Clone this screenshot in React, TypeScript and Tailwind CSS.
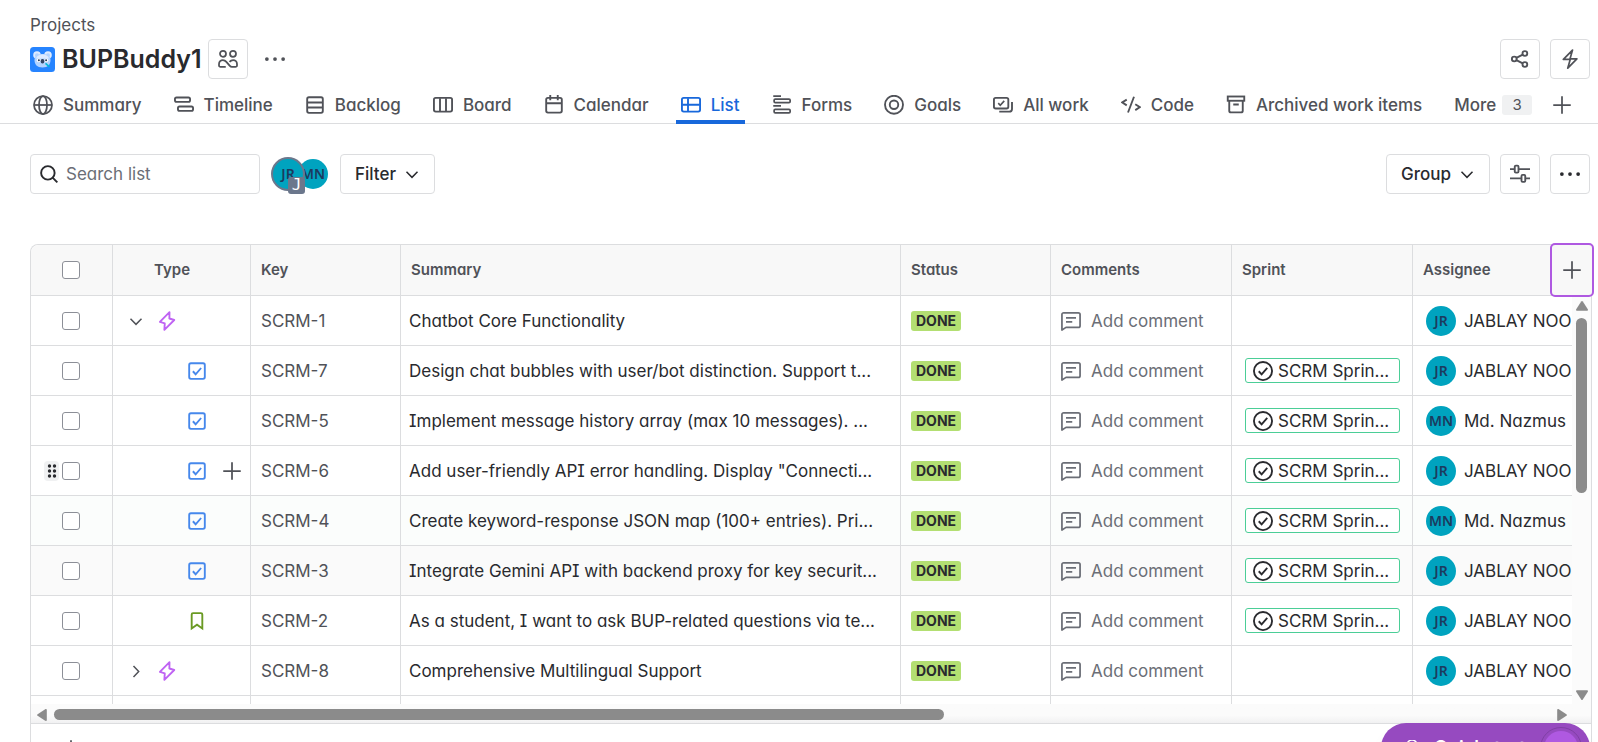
import React, { type ReactNode } from "react";

const FONT = "font-['Inter','Liberation_Sans',sans-serif] [font-feature-settings:'cv11','cv08']";

type IconProps = { children: ReactNode; className?: string };

function Icon({ children, className = "size-5" }: IconProps) {
  return (
    <svg
      viewBox="0 0 16 16"
      className={`shrink-0 ${className}`}
      fill="none"
      stroke="currentColor"
      strokeWidth="1.5"
      aria-hidden="true"
    >
      {children}
    </svg>
  );
}

const GlobeIcon = () => (
  <Icon>
    <circle cx="8" cy="8" r="7.2" strokeWidth="1.4" />
    <ellipse cx="8" cy="8" rx="3.2" ry="7.2" strokeWidth="1.4" />
    <path d="M1 8h14" strokeWidth="1.4" />
  </Icon>
);
const TimelineIcon = () => (
  <Icon>
    <rect x="0.75" y="1.95" width="12.1" height="3.5" rx="1.3" />
    <rect x="3.15" y="9.2" width="12.1" height="3.5" rx="1.3" />
  </Icon>
);
const BacklogIcon = () => (
  <Icon>
    <rect x="1.75" y="1.75" width="12.5" height="12.5" rx="1.4" />
    <path d="M2 6h12M2 10h12" />
  </Icon>
);
const BoardIcon = () => (
  <Icon>
    <rect x="0.75" y="2.25" width="14.5" height="11" rx="1.4" />
    <path d="M5.6 2.5v10.5M10.4 2.5v10.5" />
  </Icon>
);
const CalendarIcon = () => (
  <Icon>
    <rect x="1.75" y="2.25" width="12.5" height="11.8" rx="1.4" />
    <path d="M2 6.6h12M5 0v4.2M11 0v4.2" />
  </Icon>
);
const ListIcon = () => (
  <Icon>
    <rect x="0.75" y="2.25" width="14.5" height="11" rx="1.4" />
    <path d="M5.6 2.5v10.5M1 7.8h14" />
  </Icon>
);
const FormsIcon = () => (
  <Icon>
    <path d="M1 .8h6.2M1 8.6h6.2" strokeWidth="1.4" />
    <rect x="1.7" y="3.2" width="12.8" height="2.8" rx="0.9" strokeWidth="1.4" />
    <rect x="1.7" y="11.4" width="12.8" height="2.8" rx="0.9" strokeWidth="1.4" />
  </Icon>
);
const GoalsIcon = () => (
  <Icon>
    <circle cx="8" cy="7.8" r="7.2" />
    <circle cx="8" cy="7.8" r="3.4" />
  </Icon>
);
const AllWorkIcon = () => (
  <Icon>
    <rect x="0.75" y="2.25" width="11.5" height="8.5" rx="1.4" />
    <path d="m4.2 6.5 1.6 1.7L9 4.7" strokeWidth="1.3" />
    <path d="M15.2 5.500v5.600a2.200 2.200 0 0 1-2.200 2.200H5" />
  </Icon>
);
const CodeIcon = () => (
  <Icon>
    <path d="M4.6 3.700.9 5.900l3.700 2.400M11.400 7.400l3.800 2.300-3.800 2.400M10.400 1.400 5.600 14" />
  </Icon>
);
const ArchiveIcon = () => (
  <Icon>
    <rect x="1.4" y="1.2" width="13.2" height="3.4" />
    <path d="M2.600 4.600v7.900c0 .8.600 1.400 1.400 1.400h8c.8 0 1.400-.6 1.400-1.400V4.600M5.800 7.600h4.400" />
  </Icon>
);
const PlusIcon = () => (
  <Icon>
    <path d="M8 1v14M1 8h14" strokeWidth="1.4" />
  </Icon>
);
const DotsIcon = () => (
  <Icon>
    <g fill="currentColor" stroke="none">
      <circle cx="1.5" cy="8" r="1.5" />
      <circle cx="8" cy="8" r="1.5" />
      <circle cx="14.5" cy="8" r="1.5" />
    </g>
  </Icon>
);
const PeopleIcon = () => (
  <Icon>
    <circle cx="4" cy="3.8" r="2.4" strokeWidth="1.4" />
    <circle cx="12" cy="3.8" r="2.4" strokeWidth="1.4" />
    <path
      d="M6.2 14.3H2a1.2 1.2 0 0 1-1.2-1.2v-1.2A3.1 3.1 0 0 1 3.9 8.8c1.2 0 2 .5 2.8 1.5l2.6 3c.6.7 1.1 1 1.9 1H14a1.2 1.2 0 0 0 1.2-1.2v-1.2a3.1 3.1 0 0 0-3.1-3.1c-1.3 0-2 .4-2.9 1.5"
      strokeWidth="1.4"
    />
  </Icon>
);
const ShareIcon = () => (
  <Icon>
    <circle cx="3.4" cy="8" r="1.9" />
    <circle cx="11.9" cy="3.6" r="1.9" />
    <circle cx="11.9" cy="12.4" r="1.9" />
    <path d="m5.1 7.1 5.1-2.6M5.1 8.900l5.1 2.600" />
  </Icon>
);
const AutomationIcon = () => (
  <Icon>
    <path d="M10 .9 2.7 8.300h5.500L6.200 15.300 13.500 7.900H8z" strokeLinejoin="round" strokeWidth="1.4" />
  </Icon>
);
const SlidersIcon = () => (
  <Icon>
    <rect x="3.8" y="1.3" width="3" height="5.6" rx=".9" />
    <rect x="9.2" y="8.7" width="3" height="5.6" rx=".9" />
    <path d="M0 4.1h3.8M6.8 4.1H16M0 11.5h9.2M12.2 11.5H16" strokeWidth="1.3" />
  </Icon>
);
const EpicIcon = () => (
  <Icon>
    <path d="M10 .9 2.3 8.700l3.900 1.200-.3 5.200 7.900-7.900-3.900-1.200z" strokeLinejoin="round" />
  </Icon>
);
const TaskIcon = () => (
  <Icon>
    <rect x="1.75" y="1.75" width="12.5" height="12.5" rx="1.4" />
    <path d="m4.7 8.2 2.2 2.4 4.4-5" />
  </Icon>
);
const StoryIcon = () => (
  <Icon>
    <path d="M3.75 14V2.8c0-.6.5-1.1 1.1-1.1h6.300c.6 0 1.100.5 1.100 1.100V14L8 10.900z" />
  </Icon>
);
const CommentIcon = () => (
  <Icon>
    <path
      d="M.75 15.2V2.8c0-.8.6-1.400 1.400-1.400h11.700c.8 0 1.400.6 1.400 1.400v8.900c0 .8-.6 1.400-1.400 1.400H4z"
      strokeLinejoin="round"
      strokeWidth="1.4"
    />
    <path d="M4 5.500h8M4 8.700h5" strokeWidth="1.4" />
  </Icon>
);
const CheckCircleIcon = () => (
  <Icon>
    <circle cx="8" cy="8" r="7.25" />
    <path d="m4.600 8.200 2.300 2.500 4.500-5.200" />
  </Icon>
);
const SearchIcon = () => (
  <Icon className="size-[18px]">
    <circle cx="7" cy="7" r="6" strokeWidth="1.7" />
    <path d="m11.200 11.200 4.200 4.200" strokeWidth="1.7" />
  </Icon>
);
const ChevronDown = () => (
  <Icon className="size-4">
    <path d="m2.500 5.800 5.500 5.600 5.500-5.600" />
  </Icon>
);
const ChevronRight = () => (
  <Icon className="size-4">
    <path d="m5.500 2.900 5.200 5.600-5.200 5.600" />
  </Icon>
);

function KoalaLogo() {
  return (
    <svg viewBox="0 0 25 25" className="size-[25px] shrink-0" aria-hidden="true">
      <rect width="25" height="25" rx="3.5" fill="#2684ff" />
      <circle cx="7" cy="8" r="3.8" fill="#deebff" />
      <circle cx="18" cy="8" r="3.8" fill="#deebff" />
      <circle cx="7" cy="8.2" r="2" fill="#b3d4ff" />
      <circle cx="18" cy="8.2" r="2" fill="#b3d4ff" />
      <path d="M4.500 13C4.500 8.500 8.500 7 12.500 7s8 1.500 8 6-2.500 7.500-8 7.500-8-3-8-7.500z" fill="#b3d4ff" />
      <path d="M6 11.500c1-3 3.500-4 6.500-4s5.500 1 6.500 4z" fill="#deebff" />
      <circle cx="8.7" cy="13.3" r="1.9" fill="#fff" />
      <circle cx="16.3" cy="13.3" r="1.9" fill="#fff" />
      <circle cx="8.9" cy="13.3" r="1" fill="#253858" />
      <circle cx="16.1" cy="13.3" r="1" fill="#253858" />
      <rect x="10.7" y="12" width="3.6" height="4.5" rx="1.7" fill="#344563" />
      <path d="m15.500 16.300 4 3.500" stroke="#00b8d9" strokeWidth="1.6" />
    </svg>
  );
}

const TABS: { label: string; icon: ReactNode; active?: boolean }[] = [
  { label: "Summary", icon: <GlobeIcon /> },
  { label: "Timeline", icon: <TimelineIcon /> },
  { label: "Backlog", icon: <BacklogIcon /> },
  { label: "Board", icon: <BoardIcon /> },
  { label: "Calendar", icon: <CalendarIcon /> },
  { label: "List", icon: <ListIcon />, active: true },
  { label: "Forms", icon: <FormsIcon /> },
  { label: "Goals", icon: <GoalsIcon /> },
  { label: "All work", icon: <AllWorkIcon /> },
  { label: "Code", icon: <CodeIcon /> },
  { label: "Archived work items", icon: <ArchiveIcon /> },
];

type Row = {
  key: string;
  type: "epic" | "task" | "story";
  open?: boolean;
  hovered?: boolean;
  tint?: string;
  summary: string;
  sprint: boolean;
  who: "JR" | "MN";
};

const ROWS: Row[] = [
  { key: "SCRM-1", type: "epic", open: true, summary: "Chatbot Core Functionality", sprint: false, who: "JR" },
  { key: "SCRM-7", type: "task", summary: "Design chat bubbles with user/bot distinction. Support t...", sprint: true, who: "JR" },
  { key: "SCRM-5", type: "task", summary: "Implement message history array (max 10 messages). ...", sprint: true, who: "MN" },
  { key: "SCRM-6", type: "task", hovered: true, summary: "Add user-friendly API error handling. Display \"Connecti...", sprint: true, who: "JR" },
  { key: "SCRM-4", type: "task", tint: "bg-[#fbfdfc]", summary: "Create keyword-response JSON map (100+ entries). Pri...", sprint: true, who: "MN" },
  { key: "SCRM-3", type: "task", tint: "bg-[#fafafa]", summary: "Integrate Gemini API with backend proxy for key securit...", sprint: true, who: "JR" },
  { key: "SCRM-2", type: "story", summary: "As a student, I want to ask BUP-related questions via te...", sprint: true, who: "JR" },
  { key: "SCRM-8", type: "epic", summary: "Comprehensive Multilingual Support", sprint: false, who: "JR" },
];

const NAMES = { JR: "JABLAY NOOR", MN: "Md. Nazmus" };
const LINE = "border-[#dcdddf]";
const BUTTON = "flex size-10 items-center justify-center rounded-[4px] border border-[#dcdddf] bg-white";

function Avatar({ initials }: { initials: string }) {
  return (
    <span className="flex size-[30px] shrink-0 items-center justify-center rounded-full bg-[#00a3bf] font-['Noto_Sans',sans-serif] text-sm font-semibold text-[#1c3a5e]">
      {initials}
    </span>
  );
}

function Check({ label }: { label: string }) {
  return (
    <input
      type="checkbox"
      aria-label={label}
      className="block size-[18px] appearance-none rounded-[3px] border border-[#8c8f97] bg-white"
    />
  );
}

function HeadCell({ children, className = "px-2.5" }: { children: ReactNode; className?: string }) {
  return (
    <th className={`h-[51px] border-r border-b ${LINE} bg-[#f8f8f8] text-left text-[15px] leading-5 font-semibold ${className}`}>
      {children}
    </th>
  );
}

function TypeCell({ row }: { row: Row }) {
  if (row.type === "epic") {
    return (
      <div className="flex items-center gap-[13px] pl-[15px]">
        <button type="button" aria-label="Toggle children">
          {row.open ? <ChevronDown /> : <ChevronRight />}
        </button>
        <span className="text-[#bf63f3]">
          <EpicIcon />
        </span>
      </div>
    );
  }
  return (
    <div className="flex items-center gap-[15px] pl-[74px]">
      <span className={row.type === "task" ? "text-[#4688ec]" : "text-[#6a9a23]"}>
        {row.type === "task" ? <TaskIcon /> : <StoryIcon />}
      </span>
      {row.hovered && (
        <button type="button" aria-label="Create child">
          <PlusIcon />
        </button>
      )}
    </div>
  );
}

function BodyRow({ row }: { row: Row }) {
  const cell = `h-[50px] border-r border-b ${LINE} p-0`;
  return (
    <tr className={row.tint}>
      <td className={cell}>
        <div className="relative flex justify-center pr-0.5">
          <Check label={`Select ${row.key}`} />
          {row.hovered && (
            <span className="absolute top-1/2 left-[13px] flex h-5 w-[15px] -translate-y-1/2 items-center justify-center rounded-[4px] bg-[#f0f1f2]">
              <svg viewBox="0 0 10 14" className="h-3.5 w-2.5" fill="#292a2e" aria-hidden="true">
                <circle cx="2.5" cy="2" r="1.7" />
                <circle cx="7.5" cy="2" r="1.7" />
                <circle cx="2.5" cy="7" r="1.7" />
                <circle cx="7.5" cy="7" r="1.7" />
                <circle cx="2.5" cy="12" r="1.7" />
                <circle cx="7.5" cy="12" r="1.7" />
              </svg>
            </span>
          )}
        </div>
      </td>
      <td className={cell}>
        <TypeCell row={row} />
      </td>
      <td className={cell}>
        <a href="#" className="block pl-2.5 text-[#505258]">
          {row.key}
        </a>
      </td>
      <td className={cell}>
        <div className="overflow-hidden pl-2 whitespace-nowrap text-[#292a2e]">{row.summary}</div>
      </td>
      <td className={cell}>
        <div className="flex pl-2.5">
          <span className="flex h-5 items-center rounded-[3px] bg-[#b3df72] px-[5px] text-sm leading-5 font-bold text-[#292a2e]">
            DONE
          </span>
        </div>
      </td>
      <td className={cell}>
        <button type="button" className="flex items-center gap-2.5 pl-2.5 text-[#6b6e76]">
          <CommentIcon />
          Add comment
        </button>
      </td>
      <td className={cell}>
        {row.sprint && (
          <div className="mr-3 ml-[13px] flex h-[25px] items-center gap-[5px] overflow-hidden rounded-[3px] border border-[#4bce97] bg-white pl-[7px] whitespace-nowrap text-[#292a2e]">
            <CheckCircleIcon />
            SCRM Sprin...
          </div>
        )}
      </td>
      <td className={cell}>
        <div className="flex items-center gap-2 pl-[13px] whitespace-nowrap text-[#292a2e]">
          <Avatar initials={row.who} />
          {NAMES[row.who]}
        </div>
      </td>
    </tr>
  );
}

export default function App() {
  return (
    <div className={`${FONT} relative flex h-screen flex-col overflow-hidden bg-white text-[17px] leading-6 text-[#505258]`}>
      <header className={`shrink-0 border-b ${LINE}`}>
        <div className="pt-[13px] pr-2 pl-[30px]">
          <a href="#">Projects</a>
          <div className="mt-0.5 flex items-center gap-[7px]">
            <KoalaLogo />
            <h1 className="text-[25px] leading-8 font-semibold text-[#292a2e]">BUPBuddy1</h1>
            <button type="button" aria-label="Team" className={BUTTON}>
              <PeopleIcon />
            </button>
            <button type="button" aria-label="More actions" className="ml-2.5 p-0">
              <DotsIcon />
            </button>
            <div className="ml-auto flex gap-2.5">
              <button type="button" aria-label="Share" className={BUTTON}>
                <ShareIcon />
              </button>
              <button type="button" aria-label="Automation" className={BUTTON}>
                <AutomationIcon />
              </button>
            </div>
          </div>
        </div>
        <nav className="mt-[7px] -mb-px flex h-[38px] items-stretch gap-[22px] pl-7 font-medium whitespace-nowrap">
          {TABS.map((tab) => (
            <a
              key={tab.label}
              href="#"
              className={
                tab.active
                  ? "flex items-center gap-2.5 border-b-4 border-[#1868db] px-[5px] pt-1 text-[#1868db]"
                  : "flex items-center gap-2.5 px-[5px]"
              }
            >
              {tab.icon}
              {tab.label}
            </a>
          ))}
          <div className="flex gap-5">
            <button type="button" className="flex items-center gap-1.5 pl-[5px] font-medium">
              More
              <span className="flex h-5 w-[30px] items-center justify-center rounded-[3px] bg-[#f0f1f2] text-[15px] font-normal">
                3
              </span>
            </button>
            <button type="button" aria-label="Add view">
              <PlusIcon />
            </button>
          </div>
        </nav>
      </header>

      <div className="flex shrink-0 items-center pt-[30px] pr-2 pl-[30px] font-medium text-[#292a2e]">
        <label className={`flex h-10 w-[230px] items-center gap-2 rounded-[4px] border ${LINE} pl-[9px]`}>
          <SearchIcon />
          <input
            type="text"
            aria-label="Search list"
            placeholder="Search list"
            className="min-w-0 flex-1 font-normal outline-none placeholder:text-[#6b6e76]"
          />
        </label>
        <div className="ml-[11px] flex items-center">
          <div className="relative z-10 flex size-[34px] items-center justify-center rounded-full bg-[#6b778c]">
            <Avatar initials="JR" />
            <span className="absolute right-0 -bottom-[3px] flex size-[17px] items-center justify-center rounded-[3px] bg-[#6b778c] pb-0.5 font-['DejaVu_Sans_Mono',monospace] text-base leading-4 text-white">
              J
            </span>
          </div>
          <div className="-ml-[7px]">
            <Avatar initials="MN" />
          </div>
        </div>
        <button type="button" className={`ml-3 flex h-10 items-center gap-2 rounded-[4px] border ${LINE} px-3.5`}>
          Filter
          <ChevronDown />
        </button>
        <div className="ml-auto flex gap-2.5">
          <button type="button" className={`flex h-10 items-center gap-2 rounded-[4px] border ${LINE} px-3.5`}>
            Group
            <ChevronDown />
          </button>
          <button type="button" aria-label="View settings" className={`${BUTTON} text-[#505258]`}>
            <SlidersIcon />
          </button>
          <button type="button" aria-label="More" className={BUTTON}>
            <DotsIcon />
          </button>
        </div>
      </div>

      <main className={`relative mt-[50px] mr-1.5 ml-[30px] flex min-h-0 flex-1 flex-col rounded-tl-lg border-t border-r border-l ${LINE}`}>
        <div className="relative min-h-0 flex-1 overflow-hidden rounded-tl-lg">
          <table className="w-[1600px] table-fixed border-separate border-spacing-0">
            <colgroup>
              <col className="w-[82px]" />
              <col className="w-[138px]" />
              <col className="w-[150px]" />
              <col className="w-[500px]" />
              <col className="w-[150px]" />
              <col className="w-[181px]" />
              <col className="w-[181px]" />
              <col />
            </colgroup>
            <thead>
              <tr>
                <HeadCell className="p-0">
                  <div className="flex justify-center pr-0.5">
                    <Check label="Select all" />
                  </div>
                </HeadCell>
                <HeadCell className="pl-[41px]">Type</HeadCell>
                <HeadCell>Key</HeadCell>
                <HeadCell>Summary</HeadCell>
                <HeadCell>Status</HeadCell>
                <HeadCell>Comments</HeadCell>
                <HeadCell>Sprint</HeadCell>
                <HeadCell>Assignee</HeadCell>
              </tr>
            </thead>
            <tbody>
              {ROWS.map((row) => (
                <BodyRow key={row.key} row={row} />
              ))}
              <tr>
                {[1, 2, 3, 4, 5, 6, 7, 8].map((n) => (
                  <td key={n} className={`h-[50px] border-r ${LINE}`} />
                ))}
              </tr>
            </tbody>
          </table>
          <div className="absolute top-[51px] right-0 bottom-0 flex w-[19px] flex-col items-center bg-[#fbfbfb] pt-[5px] pb-1 text-[#8b8b8b]">
            <svg viewBox="0 0 12 10" className="h-2.5 w-3" fill="currentColor" aria-hidden="true">
              <path d="M5.200.6a1 1 0 0 1 1.600 0l5 7.600c.4.700 0 1.600-.8 1.600H1c-.8 0-1.200-.9-.8-1.600z" />
            </svg>
            <div className="flex w-full flex-1 justify-center pt-[7px]">
              <div className="h-[47%] w-[11px] rounded-full bg-[#8b8b8b]" />
            </div>
            <svg viewBox="0 0 12 10" className="h-2.5 w-3" fill="currentColor" aria-hidden="true">
              <path d="M5.200 9.400a1 1 0 0 0 1.600 0l5-7.600C12.200 1.100 11.800.2 11 .2H1C.2.2-.2 1.100.2 1.800z" />
            </svg>
          </div>
        </div>
        <div className="flex h-[19px] shrink-0 items-center bg-linear-to-b from-[#fbfbfb] from-60% to-[#f1f1f2] pt-0.5 pr-6 pl-1.5 text-[#8b8b8b]">
          <svg viewBox="0 0 10 12" className="h-3 w-2.5 shrink-0" fill="currentColor" aria-hidden="true">
            <path d="M.6 5.200a1 1 0 0 0 0 1.600l7.600 5c.7.400 1.600 0 1.600-.8V1c0-.8-.9-1.200-1.600-.8z" />
          </svg>
          <div className="flex-1 px-[7px]">
            <div className="h-[11px] w-[59.5%] rounded-full bg-[#8b8b8b]" />
          </div>
          <svg viewBox="0 0 10 12" className="h-3 w-2.5 shrink-0" fill="currentColor" aria-hidden="true">
            <path d="M9.400 5.200a1 1 0 0 1 0 1.600l-7.600 5C1.100 12.200.2 11.800.2 11V1C.2.200 1.100-.2 1.800.2z" />
          </svg>
        </div>
        <div className={`h-[19px] shrink-0 overflow-hidden border-t ${LINE} bg-white pt-[15px] pl-[30px]`}>
          <button type="button" aria-label="Create">
            <PlusIcon />
          </button>
        </div>
        <button
          type="button"
          aria-label="Add column"
          className="absolute -top-0.5 -right-[3px] flex h-[54px] w-11 items-center justify-center rounded-[5px] border-2 border-[#af59e1] bg-[#f8f8f8]"
        >
          <PlusIcon />
        </button>
      </main>

      <button
        type="button"
        className="absolute right-2 -bottom-[31px] flex h-[50px] w-[209px] items-center gap-3.5 rounded-full bg-[#964ac0] pr-2 pl-[23px] text-lg leading-6 font-semibold text-white shadow-lg"
      >
        <Icon className="size-4">
          <circle cx="8" cy="5.500" r="5.400" />
          <path d="M5.500 15h5" />
        </Icon>
        Quickstart
        <span className="ml-auto flex size-[42px] shrink-0 items-center justify-center rounded-full border border-[#803fa5]">
          <span className="size-[34px] rounded-full bg-[#af59e1]" />
        </span>
      </button>
    </div>
  );
}
